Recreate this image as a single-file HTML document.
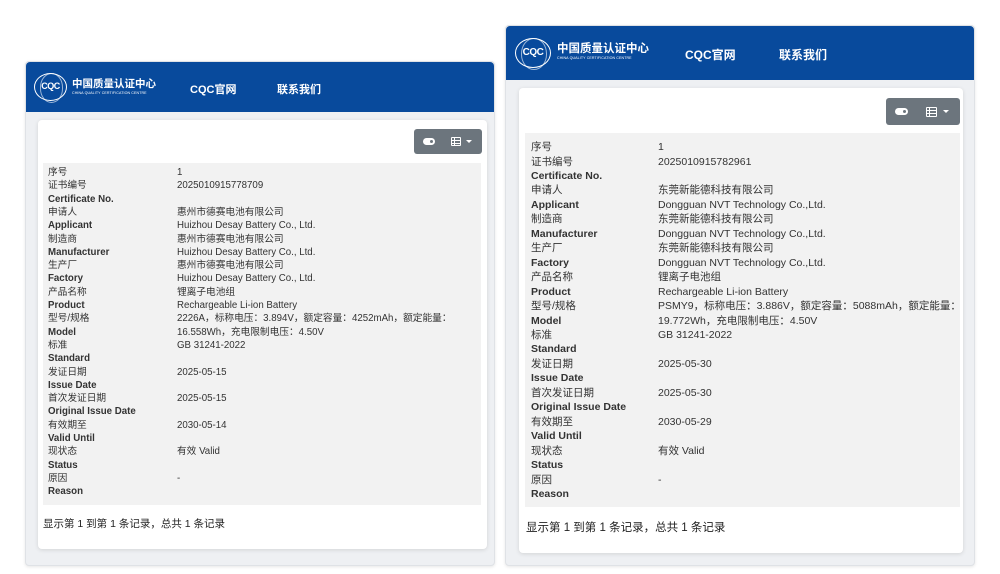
<!DOCTYPE html>
<html><head><meta charset="utf-8">
<style>
*{margin:0;padding:0;box-sizing:border-box}
body{width:1000px;height:574px;background:#fff;position:relative;overflow:hidden;font-family:"Liberation Sans","Noto Sans CJK SC",sans-serif;color:#333}
.panel{position:absolute;background:#eef0f3;border:1px solid #dfe2e6;border-radius:4px;box-shadow:0 1px 3px rgba(0,0,0,.1)}
.hdr{position:absolute;left:0;top:0;right:0;background:#084a9c;border-radius:4px 4px 0 0}
.logo{position:absolute;border:1.5px solid #fff;border-radius:50%;color:#fff;font-weight:bold;text-align:center;letter-spacing:-.5px}
.logo::before{content:"";position:absolute;left:15%;top:-2%;width:70%;height:104%;border:1px solid rgba(255,255,255,.6);border-radius:50%}
.brand{position:absolute;color:#fff;font-weight:bold;line-height:1.1}
.brand small{display:block;font-size:3.6px;font-weight:normal;letter-spacing:.1px;margin-top:1px}
.nav{position:absolute;color:#fff;font-weight:bold}
.card{position:absolute;background:#fff;border-radius:4px;box-shadow:0 1px 4px rgba(0,0,0,.12)}
.btns{position:absolute;background:#6c757d;border-radius:3px}
.tbl{position:absolute;background:#f2f2f2}
.r{position:absolute;white-space:nowrap;height:14px;line-height:14px}
.l{font-weight:bold}
.foot{position:absolute;color:#222}
</style></head><body>

<!-- LEFT -->
<div class="panel" style="left:25px;top:61px;width:470px;height:505px">
 <div class="hdr" style="height:50px">
  <div class="logo" style="left:8px;top:11px;width:33px;height:28px;font-size:9px;line-height:25px">CQC</div>
  <div class="brand" style="left:46px;top:17px;font-size:10.5px">中国质量认证中心<small>CHINA QUALITY CERTIFICATION CENTRE</small></div>
  <div class="nav" style="left:164px;top:19px;font-size:11px">CQC官网</div>
  <div class="nav" style="left:251px;top:19px;font-size:11px">联系我们</div>
 </div>
</div>
<div class="card" style="left:38px;top:120px;width:449px;height:429px"></div>
<div class="btns" style="left:414px;top:129px;width:68px;height:25px">
 <div style="position:absolute;left:9px;top:9px;width:12px;height:7px;background:#fff;border-radius:4px"><div style="position:absolute;right:2px;top:2px;width:3px;height:3px;background:#6c757d;border-radius:50%"></div></div>
 <div style="position:absolute;left:37px;top:8px;width:10px;height:9px;border:1.5px solid #fff;border-radius:1px;background:linear-gradient(#fff,#fff) 0 2px/100% 1px no-repeat,linear-gradient(#fff,#fff) 0 4.5px/100% 1px no-repeat,linear-gradient(#fff,#fff) 2px 0/1px 100% no-repeat"></div>
 <div style="position:absolute;left:52px;top:11px;border-left:3px solid transparent;border-right:3px solid transparent;border-top:3px solid #fff"></div>
</div>
<div class="tbl" style="left:43px;top:163px;width:438px;height:342px"></div>
<div id="L" style="position:absolute;left:48px;top:166px;font-size:9.7px"></div>
<div class="foot" style="left:43px;top:516px;font-size:10.5px">显示第 1 到第 1 条记录，总共 1 条记录</div>

<!-- RIGHT -->
<div class="panel" style="left:505px;top:25px;width:470px;height:541px">
 <div class="hdr" style="height:54px">
  <div class="logo" style="left:9px;top:12px;width:36px;height:30px;font-size:10px;line-height:27px">CQC</div>
  <div class="brand" style="left:51px;top:17px;font-size:11.5px">中国质量认证中心<small>CHINA QUALITY CERTIFICATION CENTRE</small></div>
  <div class="nav" style="left:179px;top:20px;font-size:12px">CQC官网</div>
  <div class="nav" style="left:273px;top:20px;font-size:12px">联系我们</div>
 </div>
</div>
<div class="card" style="left:519px;top:88px;width:444px;height:465px"></div>
<div class="btns" style="left:886px;top:98px;width:74px;height:27px">
 <div style="position:absolute;left:9px;top:10px;width:13px;height:7px;background:#fff;border-radius:4px"><div style="position:absolute;right:2px;top:2px;width:3px;height:3px;background:#6c757d;border-radius:50%"></div></div>
 <div style="position:absolute;left:40px;top:9px;width:11px;height:10px;border:1.5px solid #fff;border-radius:1px;background:linear-gradient(#fff,#fff) 0 2px/100% 1px no-repeat,linear-gradient(#fff,#fff) 0 5px/100% 1px no-repeat,linear-gradient(#fff,#fff) 2px 0/1px 100% no-repeat"></div>
 <div style="position:absolute;left:57px;top:12px;border-left:3px solid transparent;border-right:3px solid transparent;border-top:3px solid #fff"></div>
</div>
<div class="tbl" style="left:525px;top:133px;width:435px;height:374px"></div>
<div id="R" style="position:absolute;left:531px;top:140px;font-size:10.5px"></div>
<div class="foot" style="left:526px;top:519px;font-size:11.5px">显示第 1 到第 1 条记录，总共 1 条记录</div>

<script>
function build(id,step,vx,vals){
 var labels=["序号","证书编号","Certificate No.","申请人","Applicant","制造商","Manufacturer","生产厂","Factory","产品名称","Product","型号/规格","Model","标准","Standard","发证日期","Issue Date","首次发证日期","Original Issue Date","有效期至","Valid Until","现状态","Status","原因","Reason"];
 var el=document.getElementById(id),h="";
 for(var i=0;i<labels.length;i++){
  var t=Math.round(i*step*10)/10;
  var bold=/[A-Za-z]/.test(labels[i])?' l':'';
  h+='<div class="r'+bold+'" style="left:0;top:'+t+'px">'+labels[i]+'</div>';
  if(vals[i])h+='<div class="r" style="left:'+vx+'px;top:'+t+'px">'+vals[i]+'</div>';
 }
 el.innerHTML=h;
}
build("L",13.3,129,["1","2025010915778709","","惠州市德赛电池有限公司","Huizhou Desay Battery Co., Ltd.","惠州市德赛电池有限公司","Huizhou Desay Battery Co., Ltd.","惠州市德赛电池有限公司","Huizhou Desay Battery Co., Ltd.","锂离子电池组","Rechargeable Li-ion Battery","2226A，标称电压：3.894V，额定容量：4252mAh，额定能量：","16.558Wh，充电限制电压：4.50V","GB 31241-2022","","2025-05-15","","2025-05-15","","2030-05-14","","有效 Valid","","-",""]);
build("R",14.46,127,["1","2025010915782961","","东莞新能德科技有限公司","Dongguan NVT Technology Co.,Ltd.","东莞新能德科技有限公司","Dongguan NVT Technology Co.,Ltd.","东莞新能德科技有限公司","Dongguan NVT Technology Co.,Ltd.","锂离子电池组","Rechargeable Li-ion Battery","PSMY9，标称电压：3.886V，额定容量：5088mAh，额定能量：","19.772Wh，充电限制电压：4.50V","GB 31241-2022","","2025-05-30","","2025-05-30","","2030-05-29","","有效 Valid","","-",""]);
</script>
</body></html>
